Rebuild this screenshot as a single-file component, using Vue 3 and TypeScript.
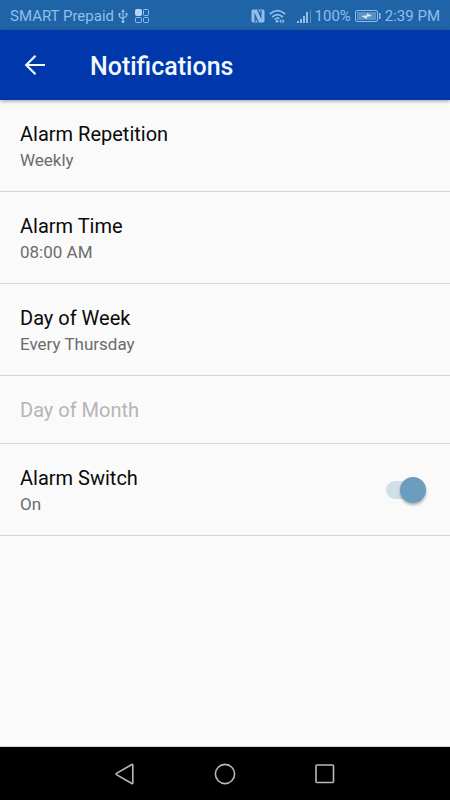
<script setup lang="ts">
import { computed, ref } from 'vue'

interface Preference {
  title: string
  summary?: string
  disabled?: boolean
}

const preferences: Preference[] = [
  { title: 'Alarm Repetition', summary: 'Weekly' },
  { title: 'Alarm Time', summary: '08:00 AM' },
  { title: 'Day of Week', summary: 'Every Thursday' },
  { title: 'Day of Month', disabled: true },
]

const alarmOn = ref(true)
const alarmState = computed(() => (alarmOn.value ? 'On' : 'Off'))
</script>

<template>
  <div class="screen">
    <div class="status">
      <div class="group carrier">
        <span>SMART Prepaid</span>
        <svg width="10" height="16" viewBox="0 0 10 16" fill="none" stroke="currentColor" stroke-width="1.2">
          <path d="M5 3v10M1.500 6.500v2.200L5 11M8.500 6.500v1.700L5 10.500" />
          <path d="M5 1 6.800 4H3.200zM.5 5h2v2h-2zM7.500 5h2v2h-2z" fill="currentColor" stroke="none" />
          <circle cx="5" cy="13.500" r="1.500" fill="currentColor" stroke="none" />
        </svg>
        <svg class="apps" width="14" height="14" viewBox="0 0 14 14" fill="none" stroke="currentColor">
          <rect x=".5" y=".5" width="6" height="6" rx="1" fill="#b3d6f5" stroke="#b3d6f5" />
          <rect x="8.500" y=".5" width="5" height="6" rx="1" />
          <rect x=".5" y="8.500" width="6" height="5" rx="1" />
          <rect x="8.500" y="8.500" width="5" height="5" rx="1" />
        </svg>
      </div>
      <div class="group">
        <svg width="14" height="14" viewBox="0 0 14 14">
          <rect x=".5" y=".5" width="13" height="13" rx="1.800" fill="currentColor" />
          <path d="M3.500 13V3.500L8 13.500H6.800L4.700 10v3zM10.500 1v9.500L6 .5h1.200L9.300 4V1z" fill="#2064a8" />
        </svg>
        <svg class="wifi" width="17" height="15" viewBox="0 0 17 15" fill="none" stroke="currentColor" stroke-width="1.700">
          <path d="M.8 5Q8.500-1.800 16.200 5M3.200 8Q8.500 3.200 13.800 8M5.600 10.600Q8.300 8.200 10.500 9.700" />
          <circle cx="8" cy="12.300" r="1.400" fill="currentColor" stroke="none" />
          <path d="m12.300 10-2.100 2.300 2.100 2.300zM13.500 10l2.100 2.300-2.100 2.300z" fill="currentColor" stroke="none" />
        </svg>
        <svg class="signal" width="15" height="15" viewBox="0 0 15 15" fill="currentColor">
          <path d="M0 12h2v2H0zM3 10h2v4H3zM6 7h2v7H6zM9 3h2v11H9z" />
          <path d="M13 1h1v13h-1z" opacity=".5" />
        </svg>
        <span class="percent">100%</span>
        <svg class="battery" width="26" height="14" viewBox="0 0 26 14">
          <rect x=".5" y="1.500" width="22" height="11" rx="1.500" fill="none" stroke="currentColor" />
          <rect x="2" y="3" width="19" height="8" fill="currentColor" opacity=".5" />
          <path d="m6 7 6-.8V4l5 3-5 .8V10z" fill="#d7ecff" />
          <path d="M24 4h1.500v6H24z" fill="currentColor" />
        </svg>
        <span class="clock">2:39 PM</span>
      </div>
    </div>

    <header class="toolbar">
      <button class="back" type="button" aria-label="Back">
        <svg width="22" height="22" viewBox="0 0 22 22" fill="none" stroke="currentColor" stroke-width="2.200">
          <path d="M21 11H3M11.500 1.700 2.200 11l9.300 9.300" />
        </svg>
      </button>
      <h1>Notifications</h1>
    </header>

    <main>
      <button
        v-for="item in preferences"
        :key="item.title"
        class="row"
        type="button"
        :disabled="item.disabled"
      >
        <span class="title">{{ item.title }}</span>
        <span v-if="item.summary" class="summary">{{ item.summary }}</span>
      </button>
      <label class="row switch-row">
        <span class="text">
          <span class="title">Alarm Switch</span>
          <span class="summary">{{ alarmState }}</span>
        </span>
        <input v-model="alarmOn" class="switch" type="checkbox" role="switch" />
      </label>
    </main>

    <nav class="navbar">
      <button type="button" aria-label="Back">
        <svg width="22" height="22" viewBox="0 0 22 22"><path d="M18.800 2v18q-.2.900-1 .5L2.500 11.600q-.8-.6 0-1.200L17.800 1.500q.8-.4 1 .5z" /></svg>
      </button>
      <button type="button" aria-label="Home">
        <svg width="22" height="22" viewBox="0 0 22 22"><circle cx="11" cy="11" r="9.600" /></svg>
      </button>
      <button type="button" aria-label="Recent apps">
        <svg width="22" height="22" viewBox="0 0 22 22"><rect x="2" y="2" width="17.500" height="17.500" rx="1" /></svg>
      </button>
    </nav>
  </div>
</template>

<style>
body {
  margin: 0;
  background: #fafafa;
}
</style>

<style scoped>
.screen {
  display: flex;
  flex-direction: column;
  min-height: 100vh;
  background: #fafafa;
  color: #0a0a0a;
  font-family: Roboto, "Liberation Sans", sans-serif;
}

svg {
  display: block;
  flex: none;
}

button {
  border: 0;
  background: none;
  font: inherit;
  text-align: left;
}

.status {
  display: flex;
  justify-content: space-between;
  box-sizing: border-box;
  height: 30px;
  padding: 2px 10px 0;
  background: #2064a8;
  color: #8fbfea;
  font-size: 15px;
  line-height: 28px;
  white-space: nowrap;
}

.group {
  display: flex;
  align-items: center;
}

.carrier {
  gap: 4px;
}

.apps {
  margin-left: 3px;
}

.wifi {
  margin-left: 4px;
}

.signal {
  margin-left: 11px;
}

.percent {
  margin-left: 3px;
}

.battery {
  margin: 0 4px;
}

.toolbar {
  display: flex;
  align-items: center;
  height: 70px;
  background: #0038ac;
  color: #f2f8ff;
  box-shadow: 0 1px 4px rgba(0, 0, 0, 0.4);
}

.back {
  display: flex;
  align-items: center;
  height: 70px;
  padding: 0 24px;
  color: inherit;
}

h1 {
  margin: 0 20px;
  padding-top: 3px;
  font-size: 25px;
  font-weight: 500;
  line-height: 32px;
}

main {
  flex: 1;
}

.row {
  display: block;
  box-sizing: border-box;
  width: 100%;
  padding: 21px 20px 20px;
  border-bottom: 1px solid #d5d5d5;
  color: #0a0a0a;
}

.row:disabled {
  color: #b5b5b5;
}

.title,
.summary {
  display: block;
}

.title {
  font-size: 20px;
  line-height: 26px;
}

.summary {
  margin-top: 2px;
  color: #6c6c6c;
  font-size: 17px;
  line-height: 22px;
}

.switch-row {
  display: flex;
  align-items: center;
  justify-content: space-between;
}

.switch {
  display: flex;
  align-items: center;
  width: 40px;
  height: 18px;
  margin: 0 4px 0 0;
  border-radius: 9px;
  appearance: none;
  background: #d0e0e8;
}

.switch::before {
  content: "";
  width: 26px;
  height: 26px;
  border-radius: 50%;
  background: #f1f1f1;
  box-shadow: 0 2px 3px rgba(0, 0, 0, 0.3);
}

.switch:checked::before {
  margin-left: auto;
  background: #6b9dbe;
}

.navbar {
  display: flex;
  align-items: center;
  justify-content: center;
  gap: 50px;
  height: 53px;
  border-top: 1px solid #d5d5d5;
  background: #000;
}

.navbar button {
  display: flex;
  justify-content: center;
  width: 50px;
  padding: 0;
}

.navbar svg {
  fill: none;
  stroke: #b9b9b9;
  stroke-width: 1.6;
}
</style>
